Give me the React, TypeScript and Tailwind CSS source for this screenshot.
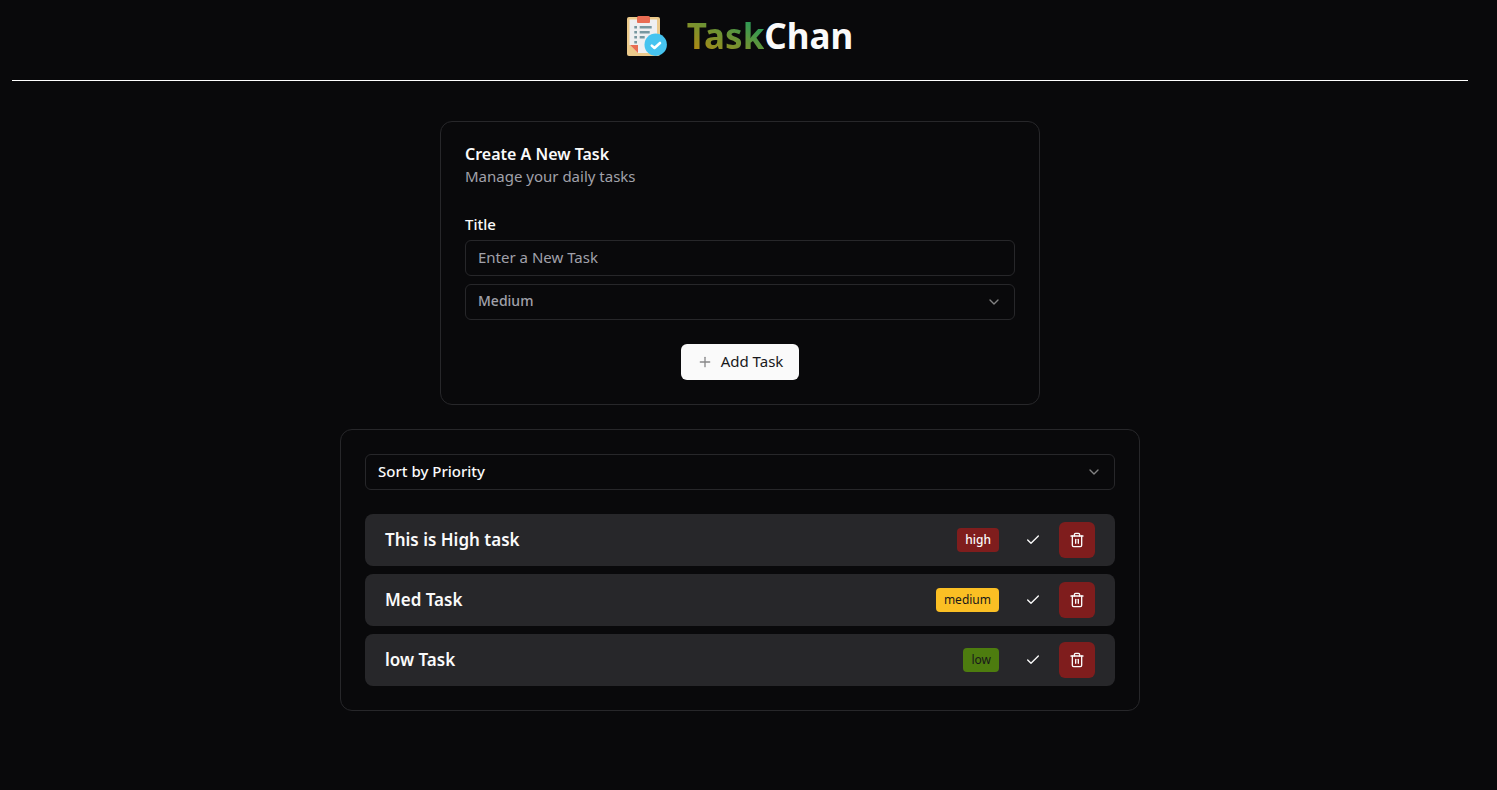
import { useState } from "react";
import { Check, ChevronDown, Plus, Trash2 } from "lucide-react";

type Priority = "high" | "medium" | "low";
type Task = { id: number; title: string; priority: Priority };

const initialTasks: Task[] = [
  { id: 1, title: "This is High task", priority: "high" },
  { id: 2, title: "Med Task", priority: "medium" },
  { id: 3, title: "low Task", priority: "low" },
];

const badgeStyles: Record<Priority, string> = {
  high: "bg-[#7f1d1d] text-[#fafafa] font-medium",
  medium: "bg-[#fbbf24] text-[#18181b]",
  low: "bg-[#4d7c0f] text-[#18181b]",
};

function Logo() {
  return (
    <svg viewBox="0 0 40 40" className="size-10" aria-hidden="true">
      <rect x="0" y="1" width="33" height="39" rx="2" fill="#ebc98b" />
      <path d="M2.500 3.500h27.500v33.500H11L3 29h-.5z" fill="#efeff1" />
      <path d="M3 29h8v8z" fill="#e96d54" />
      <path d="M10 1.500a1.500 1.500 0 0 1 1.500-1.500h10a1.500 1.500 0 0 1 1.500 1.500V6a1 1 0 0 1-1 1H11a1 1 0 0 1-1-1z" fill="#e96d54" />
      <path d="M7.300 11.300h2.700M7.300 16.300h2.700M7.300 21.300h2.700M7.300 26.300h2.700M12.700 11.300h12M12.700 16.300h10M12.700 21.300h5" stroke="#7797a0" strokeWidth="2.400" />
      <circle cx="28.700" cy="28.700" r="11.200" fill="#46c4f0" />
      <path d="M24.800 29.600l2.700 2.400 5.500-5" fill="none" stroke="#fff" strokeWidth="2.600" strokeLinecap="round" strokeLinejoin="round" />
    </svg>
  );
}

function SelectBox(props: {
  label: string;
  value: string;
  options: string[];
  className: string;
  onChange: (value: string) => void;
}) {
  return (
    <div className="relative">
      <select
        aria-label={props.label}
        value={props.value}
        onChange={(e) => props.onChange(e.target.value)}
        className={`block h-9 w-full appearance-none rounded-md border border-[#27272a] bg-[#09090b] px-3 pb-0.5 font-medium ${props.className}`}
      >
        {props.options.map((option) => (
          <option key={option}>{option}</option>
        ))}
      </select>
      <ChevronDown className="pointer-events-none absolute top-2.5 right-[13px] size-4 opacity-50" />
    </div>
  );
}

export default function App() {
  const [tasks, setTasks] = useState(initialTasks);
  const [title, setTitle] = useState("");
  const [priority, setPriority] = useState("Medium");
  const [sort, setSort] = useState("Sort by Priority");

  const addTask = () => {
    if (!title.trim()) return;
    setTasks([...tasks, { id: Date.now(), title, priority: priority.toLowerCase() as Priority }]);
    setTitle("");
  };
  const removeTask = (id: number) => setTasks(tasks.filter((task) => task.id !== id));

  return (
    <div className="min-h-screen bg-[#09090b] pr-[17px] font-['Noto_Sans',sans-serif] text-[#fafafa]">
      <header className="mx-3 flex h-[81px] items-start justify-center gap-5 border-b border-white pt-4">
        <Logo />
        <h1 className="text-[35px] leading-10 font-bold">
          <span className="inline-block bg-linear-to-tr/srgb from-[#c28508] via-[#6f9333] to-[#0c9c68] bg-clip-text text-transparent">Task</span>Chan
        </h1>
      </header>

      <main className="flex flex-col items-center gap-6 px-3 pt-10 pb-6">
        <section className="w-full max-w-[600px] rounded-xl border border-[#27272a] p-6">
          <h2 className="leading-4 font-semibold">Create A New Task</h2>
          <p className="mt-1 text-[15px] leading-5 text-[#a1a1aa]">Manage your daily tasks</p>
          <form
            className="mt-7"
            onSubmit={(e) => {
              e.preventDefault();
              addTask();
            }}
          >
            <label htmlFor="title" className="block text-[15px] leading-5 font-medium">
              Title
            </label>
            <input
              id="title"
              value={title}
              onChange={(e) => setTitle(e.target.value)}
              placeholder="Enter a New Task"
              className="mt-1.5 mb-2 block h-9 w-full rounded-md border border-[#27272a] bg-transparent px-3 pb-0.5 text-[15px] placeholder:text-[#a1a1aa]"
            />
            <SelectBox
              label="Priority"
              value={priority}
              options={["High", "Medium", "Low"]}
              className="text-sm text-[#a1a1aa]"
              onChange={setPriority}
            />
            <button type="submit" className="mx-auto mt-6 flex h-9 items-center gap-2 rounded-md bg-[#fafafa] px-4 text-[15px] text-[#18181b]">
              <Plus className="size-4 opacity-50" />
              <span className="pb-0.5">Add Task</span>
            </button>
          </form>
        </section>

        <section className="w-full max-w-[800px] rounded-xl border border-[#27272a] p-6">
          <SelectBox
            label="Sort tasks"
            value={sort}
            options={["Sort by Priority", "Sort by Title"]}
            className="text-[15px]"
            onChange={setSort}
          />
          <ul className="mt-6 flex flex-col gap-2">
            {tasks.map((task) => (
              <li key={task.id} className="flex items-center rounded-lg bg-[#27272a] px-5 py-2">
                <span className="flex-1 text-[17px] leading-6 font-semibold">{task.title}</span>
                <span className={`rounded px-2 text-xs leading-6 ${badgeStyles[task.priority]}`}>{task.priority}</span>
                <button type="button" aria-label="Complete task" className="ml-4 flex size-9 items-center justify-center">
                  <Check className="size-4" />
                </button>
                <button
                  type="button"
                  aria-label="Delete task"
                  onClick={() => removeTask(task.id)}
                  className="ml-2 flex size-9 items-center justify-center rounded-md bg-[#7f1d1d]"
                >
                  <Trash2 className="size-4" />
                </button>
              </li>
            ))}
          </ul>
        </section>
      </main>
    </div>
  );
}
